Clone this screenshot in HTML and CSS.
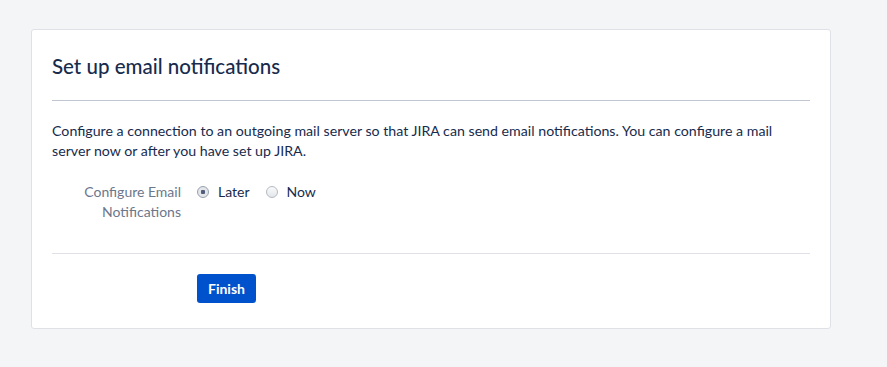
FILE: index.html
```html
<!DOCTYPE html>
<html lang="en">
<head>
  <meta charset="UTF-8">
  <title>Set up email notifications</title>
  <link rel="stylesheet" href="styles.css">
</head>
<body>
  <div class="page">
    <form class="setup-card">
      <header class="setup-header">
        <h2>Set up email notifications</h2>
      </header>

      <p class="intro">Configure a connection to an outgoing mail server so that JIRA can send email notifications. You can configure a mail server now or after you have set up JIRA.</p>

      <div class="field-group">
        <span class="field-label">Configure Email Notifications</span>
        <div class="radio-list">
          <label class="radio"><input type="radio" name="email" value="later" checked> Later</label>
          <label class="radio"><input type="radio" name="email" value="now"> Now</label>
        </div>
      </div>

      <div class="buttons">
        <button type="button" class="button primary">Finish</button>
      </div>
    </form>
  </div>
</body>
</html>
```

FILE: styles.css
```css
body {
  margin: 0;
  padding: 0;
  background-color: #f4f5f7;
  font-family: Lato, "Noto Sans", Arial, sans-serif;
  font-size: 14px;
  line-height: 20px;
  color: #172b4d;
}

.page {
  padding: 29px 0 0 31px;
}

.setup-card {
  width: 758px;
  background-color: #fff;
  border: 1px solid #dfe1e6;
  border-radius: 3px;
  padding: 24px 20px 25px 20px;
}

.setup-header {
  border-bottom: 1px solid #c1c7d0;
  padding-bottom: 22px;
}

.setup-header h2 {
  margin: 0;
  font-size: 20.5px;
  line-height: 24px;
  font-weight: 500;
  color: #172b4d;
}

.intro {
  margin: 20px 0 21px 0;
  font-size: 14.2px;
}

.field-group {
  display: flex;
  padding-bottom: 31px;
  border-bottom: 1px solid #dfe1e6;
}

.field-label {
  width: 129px;
  padding-right: 16px;
  text-align: right;
  color: #6b778c;
}

.radio-list {
  display: flex;
  gap: 16px;
}

.radio {
  display: flex;
  align-items: center;
  gap: 9px;
  height: 20px;
}

.radio input {
  appearance: none;
  -webkit-appearance: none;
  margin: 0;
  width: 12px;
  height: 12px;
  border: 1px solid #b3bac5;
  border-radius: 50%;
  background: linear-gradient(#fafafa, #e4e6ea);
}

.radio input:checked {
  background: radial-gradient(circle, #505f79 0 2px, #e4e6ea 2.5px);
  border-color: #97a0af;
}

.buttons {
  padding: 20px 0 0 145px;
}

.button {
  font-family: inherit;
  font-size: 14px;
  font-weight: bold;
  height: 29px;
  padding: 0 11px;
  border: none;
  border-radius: 3px;
  cursor: pointer;
}

.button.primary {
  background-color: #0052cc;
  color: #fff;
}

.button.primary:hover {
  background-color: #0065ff;
}
```
